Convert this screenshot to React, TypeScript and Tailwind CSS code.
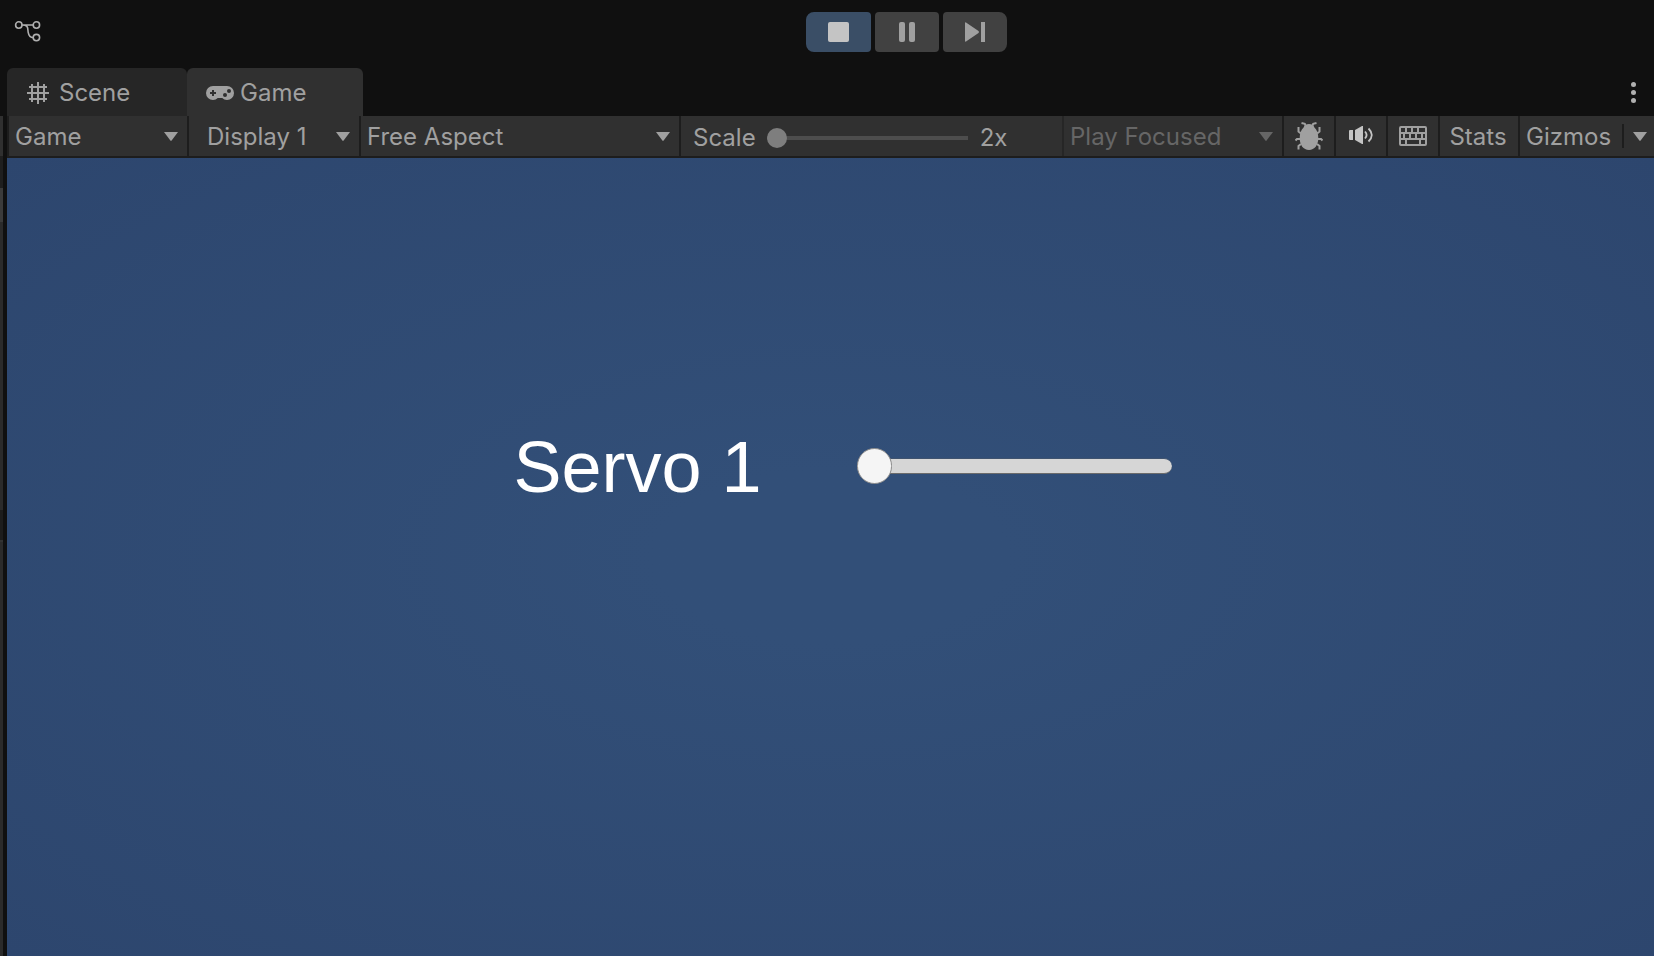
import React, { useState } from 'react';

const views = ['Game', 'Simulator'];
const displays = ['Display 1', 'Display 2', 'Display 3'];
const aspects = ['Free Aspect', '16:9 Aspect', '16:10 Aspect', 'Full HD (1920x1080)'];
const playModes = ['Play Focused', 'Play Maximized', 'Play Unfocused'];

function Arrow({ className = '' }: { className?: string }) {
  return (
    <svg className={`pointer-events-none ${className}`} width="14" height="9" viewBox="0 0 14 9" fill="currentColor" aria-hidden="true">
      <path d="M0 0h14L7.6 8.6q-.6.6-1.2 0z" />
    </svg>
  );
}

type DropdownProps = {
  label: string;
  options: string[];
  className: string;
  disabled?: boolean;
};

function Dropdown({ label, options, className, disabled }: DropdownProps) {
  return (
    <div className={`relative h-10 shrink-0 border-r-2 border-[#1d1d1d] ${disabled ? 'text-[#666666]' : ''}`}>
      <select
        aria-label={label}
        disabled={disabled}
        className={`h-10 appearance-none bg-transparent pt-px outline-none disabled:opacity-100 ${className}`}
      >
        {options.map((option) => (
          <option key={option}>{option}</option>
        ))}
      </select>
      <Arrow className="absolute top-4 right-[9px]" />
    </div>
  );
}

function GraphIcon() {
  return (
    <svg width="28" height="24" viewBox="0 0 28 24" fill="none" stroke="#b0b0b0" strokeWidth="1.6" aria-hidden="true">
      <circle cx="4.8" cy="5" r="3.2" />
      <circle cx="22.4" cy="5" r="3.2" />
      <circle cx="22.4" cy="17.6" r="3.2" />
      <path d="M8 5h11.2M8 5c7 0 5.5 4 6.2 7.4.6 3.4 2 5.2 5 5.2" />
    </svg>
  );
}

function GridIcon() {
  return (
    <svg width="22" height="22" viewBox="0 0 22 22" fill="none" stroke="#a0a0a0" strokeWidth="2" aria-hidden="true">
      <path d="M5 2v18M11 0v22M17 2v18M2 5h18M0 11h22M2 17h18" />
    </svg>
  );
}

function GamepadIcon() {
  return (
    <svg width="28" height="14" viewBox="0 0 28 14" aria-hidden="true">
      <path fill="#a0a0a0" d="M7 0h14a7 7 0 0 1 0 14c-2 0-3.5-.8-4.7-2h-4.6C10.5 13.2 9 14 7 14A7 7 0 0 1 7 0z" />
      <path stroke="#303030" strokeWidth="2" d="M4 7h6M7 4v6" />
      <circle cx="23" cy="5" r="2" fill="#303030" />
      <circle cx="19" cy="9" r="2" fill="#303030" />
    </svg>
  );
}

function BugIcon() {
  return (
    <svg width="28" height="28" viewBox="0 0 28 28" aria-hidden="true">
      <path fill="#a0a0a0" d="M14 2c2.800 0 4.800 1.400 5.400 3.600C22 8 23.300 11.500 23.300 16c0 7-3.700 12-9.300 12s-9.300-5-9.300-12c0-4.500 1.300-8 3.900-10.400C9.200 3.400 11.200 2 14 2z" />
      <path
        fill="none"
        stroke="#a0a0a0"
        strokeWidth="2"
        d="M10.500 3.500 9.800 1.800 6.500 1M17.500 3.500l.7-1.700L21.500 1M6 11.500 3.500 9.500V5M22 11.500l2.500-2V5M5 17H2L.5 18.500M23 17h3l1.500 1.500M6 22l-2.500 2v3.500M22 22l2.500 2v3.500"
      />
    </svg>
  );
}

function SpeakerIcon() {
  return (
    <svg width="25" height="18" viewBox="0 0 25 18" aria-hidden="true">
      <path fill="#c4c4c4" d="M1 4h3v10H1q-1 0-1-1V5q0-1 1-1zM6 4l7-4h1v18h-1l-7-4z" />
      <path fill="none" stroke="#c4c4c4" strokeWidth="1.800" d="M16 5.500q3.200 3.500 0 7M19.500 2.500q6.600 6.500 0 13" />
    </svg>
  );
}

function KeyboardIcon() {
  return (
    <svg width="28" height="20" viewBox="0 0 28 20" fill="none" stroke="#a0a0a0" strokeWidth="2" aria-hidden="true">
      <rect x="1" y="1" width="26" height="18" rx="1" />
      <path d="M1 7h26M1 13h26M7 1v6M13 1v6M19 1v6M5 7v6M11 7v6M17 7v6M23 7v6M7 13v6M21 13v6" />
    </svg>
  );
}

export default function App() {
  const [scale, setScale] = useState(2);
  const [servo, setServo] = useState(0);

  return (
    <div className="flex min-h-screen bg-[#101010] font-[Inter,sans-serif] text-2xl text-[#a0a0a0]">
      {/* Edge of the neighbouring panel */}
      <div className="mr-1 flex w-[3px] shrink-0 flex-col bg-[#2b2b2b]">
        <div className="h-29 bg-[#101010]" />
        <div className="h-10 bg-[#303030]" />
        <div className="h-8 bg-[#1f1f1f]" />
        <div className="h-[34px] bg-[#3b3b3b]" />
        <div className="h-72" />
        <div className="h-8 border-b-2 border-[#333333] bg-[#1d1d1d]" />
      </div>

      <div className="flex min-w-0 flex-1 flex-col">
        {/* Play controls */}
        <header className="relative flex h-17 items-start justify-center pt-3 pl-[152px]">
          <button aria-label="Version control" className="absolute top-5 left-[7px]">
            <GraphIcon />
          </button>
          <div className="flex gap-1">
            <button aria-label="Stop" className="flex h-10 w-[65px] items-center justify-center rounded-l-lg rounded-r-sm bg-[#3a4e66]">
              <span className="h-5 w-[21px] rounded-xs bg-[#c4c4c4]" />
            </button>
            <button aria-label="Pause" className="flex h-10 w-16 items-center justify-center gap-1 rounded-sm bg-[#414141]">
              <span className="h-5 w-1.5 rounded-xs bg-[#a0a0a0]" />
              <span className="h-5 w-1.5 rounded-xs bg-[#a0a0a0]" />
            </button>
            <button aria-label="Step" className="flex h-10 w-16 items-center justify-center rounded-l-sm rounded-r-lg bg-[#414141]">
              <svg width="20" height="20" viewBox="0 0 20 20" fill="#a0a0a0" aria-hidden="true">
                <path d="M0 1q0-1 1-.6L13.500 9q1 1 0 2L1 19.600Q0 20 0 19zM16 0h4v20h-4z" />
              </svg>
            </button>
          </div>
        </header>

        {/* Tabs */}
        <div className="flex h-12 items-stretch">
          <button className="flex w-[180px] items-center gap-2.5 rounded-t-md bg-[#262626] pt-0.5 pl-5">
            <GridIcon />
            Scene
          </button>
          <button className="flex w-44 items-center gap-1.5 rounded-t-md bg-[#303030] pt-0.5 pl-[19px]">
            <GamepadIcon />
            Game
          </button>
          <button aria-label="Tab menu" className="mr-[18px] ml-auto flex flex-col items-center justify-center gap-[3px]">
            <span className="size-[5px] rounded-full bg-[#b0b0b0]" />
            <span className="size-[5px] rounded-full bg-[#b0b0b0]" />
            <span className="size-[5px] rounded-full bg-[#b0b0b0]" />
          </button>
        </div>

        {/* Game view toolbar */}
        <div className="flex h-[42px] border-b-2 border-l-2 border-[#1d1d1d] bg-[#303030]">
          <Dropdown label="View" options={views} className="w-[178px] pl-1.5" />
          <Dropdown label="Display" options={displays} className="w-[170px] pl-[18px]" />
          <Dropdown label="Aspect" options={aspects} className="w-[318px] pl-1.5" />
          <div className="flex min-w-0 flex-1 items-center border-r-2 border-[#262626] pt-1 pl-3">
            <label htmlFor="scale">Scale</label>
            <input
              id="scale"
              type="range"
              min={2}
              max={10}
              step={0.1}
              value={scale}
              onChange={(e) => setScale(Number(e.target.value))}
              className="mr-3 ml-[11px] h-5 w-[201px] appearance-none bg-[linear-gradient(#4d4d4d,#4d4d4d)] bg-[length:100%_4px] bg-center bg-no-repeat [&::-webkit-slider-thumb]:size-5 [&::-webkit-slider-thumb]:appearance-none [&::-webkit-slider-thumb]:rounded-full [&::-webkit-slider-thumb]:bg-[#7e7e7e]"
            />
            <output htmlFor="scale">{scale}x</output>
          </div>
          <Dropdown label="Play mode" options={playModes} className="w-[218px] pl-1.5" disabled />
          <button aria-label="Frame debugger" className="flex w-[52px] items-center justify-center border-r-2 border-[#1d1d1d]">
            <BugIcon />
          </button>
          <button aria-label="Mute audio" className="flex w-[52px] items-center justify-center border-r-2 border-[#1d1d1d] pb-0.5">
            <SpeakerIcon />
          </button>
          <button aria-label="Shortcuts" className="flex w-[52px] items-center justify-center border-r-2 border-[#1d1d1d]">
            <KeyboardIcon />
          </button>
          <button className="w-20 border-r-2 border-[#1d1d1d] pt-px pr-0.5">Stats</button>
          <button className="w-[102px] pt-px pl-1.5 text-left">Gizmos</button>
          <button aria-label="Gizmo options" className="my-2 w-8 border-l-2 border-[#1d1d1d] pl-[9px]">
            <Arrow />
          </button>
        </div>

        {/* Rendered scene */}
        <main className="flex flex-1 items-start justify-center bg-radial from-[#324f78] from-15% to-[#2d466e] pt-[268px] pl-6 font-['Liberation_Sans',Arial,sans-serif]">
          <div className="flex h-20 items-center">
            <label htmlFor="servo" className="w-[343px] pt-0.5 text-7xl text-white">
              Servo 1
            </label>
            <input
              id="servo"
              type="range"
              min={0}
              max={180}
              value={servo}
              onChange={(e) => setServo(Number(e.target.value))}
              className="h-9 w-[315px] appearance-none bg-transparent [&::-webkit-slider-runnable-track]:h-4 [&::-webkit-slider-runnable-track]:rounded-full [&::-webkit-slider-runnable-track]:border-y [&::-webkit-slider-runnable-track]:border-t-[#3f536f] [&::-webkit-slider-runnable-track]:border-b-[#6b6b6b] [&::-webkit-slider-runnable-track]:bg-[#d6d6d6] [&::-webkit-slider-thumb]:-mt-[11px] [&::-webkit-slider-thumb]:h-9 [&::-webkit-slider-thumb]:w-[35px] [&::-webkit-slider-thumb]:appearance-none [&::-webkit-slider-thumb]:rounded-full [&::-webkit-slider-thumb]:border [&::-webkit-slider-thumb]:border-[#8a8a8a] [&::-webkit-slider-thumb]:bg-[#f5f5f5]"
            />
          </div>
        </main>
      </div>
    </div>
  );
}
